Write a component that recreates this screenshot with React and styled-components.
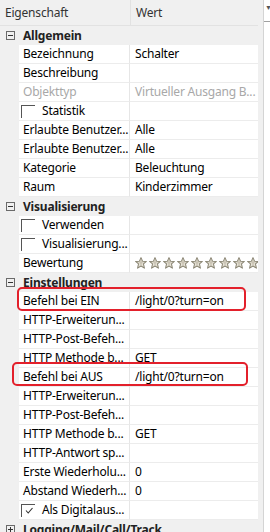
import React from "react";
import styled, { createGlobalStyle } from "styled-components";

const Global = createGlobalStyle`
  html, body { margin: 0; padding: 0; background: #ffffff; }
  body { font-family: "Noto Sans", "Segoe UI", Arial, sans-serif; font-size: 12px; letter-spacing: -0.2px; color: #000; }
`;

const Frame = styled.div`
  position: relative;
  width: 270px;
  height: 532px;
  overflow: hidden;
  display: flex;
  background: #fff;
`;

const Grid = styled.div`
  width: 258px;
  flex: none;
  display: flex;
  flex-direction: column;
`;

const Gap = styled.div`
  width: 5px;
  flex: none;
  background: #f0f0f0;
`;

const Side = styled.div`
  flex: 1;
  border-left: 1px solid #d4d4d4;
  display: flex;
  flex-direction: column;
`;

const SideHead = styled.div`
  height: 22px;
  border-bottom: 1px solid #a0a0a0;
  font-size: 7px;
  color: #555;
  padding: 4px 0 0 1px;
  box-sizing: border-box;
  width: 6px;
  overflow: hidden;
  line-height: 8px;
`;

const Header = styled.div`
  height: 25px;
  border-bottom: 1px solid #e2e2e2;
  background: #f0f0f0;
  display: flex;
  align-items: center;
  color: #333;
  flex: none;
`;

const HeadCell = styled.div`
  width: ${(p) => p.$w}px;
  padding-left: ${(p) => p.$pad}px;
  box-sizing: border-box;
  height: 100%;
  display: flex;
  align-items: center;
  border-right: ${(p) => (p.$divider ? "1px solid #e2e2e2" : "none")};
  flex: ${(p) => (p.$w ? "none" : "1")};
`;

const GroupRow = styled.div`
  height: 19px;
  flex: none;
  background: #f0f0f0;
  display: flex;
  align-items: center;
  font-weight: bold;
  color: #222;
  white-space: nowrap;
`;

const Toggle = styled.div`
  width: 9px;
  height: 9px;
  box-sizing: border-box;
  border: 1px solid #6a6a6a;
  margin: 0 8px 0 6px;
  position: relative;
  flex: none;
  &::before {
    content: "";
    position: absolute;
    left: 1px;
    right: 1px;
    top: 3px;
    height: 1px;
    background: #333;
  }
  &::after {
    content: "";
    display: ${(p) => (p.$open ? "none" : "block")};
    position: absolute;
    top: 1px;
    bottom: 1px;
    left: 3px;
    width: 1px;
    background: #333;
  }
`;

const Row = styled.div`
  height: 19px;
  flex: none;
  display: flex;
`;

const Gutter = styled.div`
  width: 19px;
  flex: none;
  background: #f0f0f0;
`;

const NameCell = styled.div`
  width: 111px;
  flex: none;
  box-sizing: border-box;
  border-right: 1px solid #e6e6e6;
  border-bottom: 1px solid #ececec;
  padding-left: ${(p) => (p.$check ? 2 : 4)}px;
  display: flex;
  align-items: center;
  white-space: nowrap;
  overflow: hidden;
  color: ${(p) => (p.$disabled ? "#a8a8a8" : "#000")};
  line-height: 18px;
`;

const ValueCell = styled.div`
  flex: 1;
  box-sizing: border-box;
  border-bottom: 1px solid #ececec;
  padding-left: 5px;
  display: flex;
  align-items: center;
  white-space: nowrap;
  overflow: hidden;
  color: ${(p) => (p.$disabled ? "#a8a8a8" : "#000")};
  line-height: 18px;
`;

const Box = styled.div`
  width: 14px;
  height: 13px;
  box-sizing: border-box;
  border-top: 1px solid #555;
  border-left: 1px solid #555;
  margin-right: 7px;
  flex: none;
  display: flex;
  align-items: center;
  justify-content: center;
`;

const Stars = styled.div`
  display: flex;
  gap: 2px;
  padding-left: 0;
`;

const Mark = styled.div`
  position: absolute;
  left: ${(p) => p.$x}px;
  top: ${(p) => p.$y}px;
  width: ${(p) => p.$w}px;
  height: ${(p) => p.$h}px;
  border: 2px solid #e3202b;
  border-radius: 5px;
  box-sizing: border-box;
  pointer-events: none;
`;

const Star = () => (
  <svg width="12" height="12" viewBox="0 0 20 20" style={{ flex: "none" }}>
    <path
      d="M10 1 L12.6 6.9 L19 7.4 L14.1 11.6 L15.7 18.6 L10 15 L4.3 18.6 L5.9 11.6 L1 7.4 L7.4 6.9 Z"
      fill="#e6e2d6"
      stroke="#8a8573"
      strokeWidth="1.7"
      strokeLinejoin="round"
    />
    <path d="M10 5.5 L10 13" stroke="#aaa491" strokeWidth="1.3" />
    <path d="M6 9.5 L14 9.5" stroke="#c2bcab" strokeWidth="1" />
  </svg>
);

const Check = () => (
  <svg width="10" height="9" viewBox="0 0 10 9">
    <path d="M2 4.5 L4.2 7 L8.5 2" fill="none" stroke="#333" strokeWidth="1.1" />
  </svg>
);

const rows = [
  { group: "Allgemein", open: true },
  { name: "Bezeichnung", value: "Schalter" },
  { name: "Beschreibung", value: "" },
  { name: "Objekttyp", value: "Virtueller Ausgang B...", disabled: true },
  { name: "Statistik", check: false },
  { name: "Erlaubte Benutzer...", value: "Alle" },
  { name: "Erlaubte Benutzer...", value: "Alle" },
  { name: "Kategorie", value: "Beleuchtung" },
  { name: "Raum", value: "Kinderzimmer" },
  { group: "Visualisierung", open: true },
  { name: "Verwenden", check: false },
  { name: "Visualisierung...", check: false },
  { name: "Bewertung", stars: true },
  { group: "Einstellungen", open: true },
  { name: "Befehl bei EIN", value: "/light/0?turn=on" },
  { name: "HTTP-Erweiterun...", value: "" },
  { name: "HTTP-Post-Befeh...", value: "" },
  { name: "HTTP Methode b...", value: "GET" },
  { name: "Befehl bei AUS", value: "/light/0?turn=on" },
  { name: "HTTP-Erweiterun...", value: "" },
  { name: "HTTP-Post-Befeh...", value: "" },
  { name: "HTTP Methode b...", value: "GET" },
  { name: "HTTP-Antwort sp...", value: "" },
  { name: "Erste Wiederholu...", value: "0" },
  { name: "Abstand Wiederh...", value: "0" },
  { name: "Als Digitalaus...", check: true },
  { group: "Logging/Mail/Call/Track", open: false },
];

export default function App() {
  return (
    <>
      <Global />
      <Frame>
        <Grid>
          <Header>
            <HeadCell $w={131} $pad={5} $divider>
              Eigenschaft
            </HeadCell>
            <HeadCell $pad={5}>Wert</HeadCell>
          </Header>
          {rows.map((r, i) =>
            r.group ? (
              <GroupRow key={i}>
                <Toggle $open={r.open} />
                {r.group}
              </GroupRow>
            ) : (
              <Row key={i}>
                <Gutter />
                <NameCell $disabled={r.disabled} $check={r.check !== undefined}>
                  {r.check !== undefined && <Box>{r.check && <Check />}</Box>}
                  {r.name}
                </NameCell>
                <ValueCell $disabled={r.disabled}>
                  {r.stars ? (
                    <Stars>
                      {Array.from({ length: 10 }).map((_, k) => (
                        <Star key={k} />
                      ))}
                    </Stars>
                  ) : (
                    r.value
                  )}
                </ValueCell>
              </Row>
            )
          )}
        </Grid>
        <Gap />
        <Side>
          <SideHead>▼</SideHead>
        </Side>
        <Mark $x={17} $y={287} $w={229} $h={24} />
        <Mark $x={12} $y={362} $w={236} $h={24} />
      </Frame>
    </>
  );
}
